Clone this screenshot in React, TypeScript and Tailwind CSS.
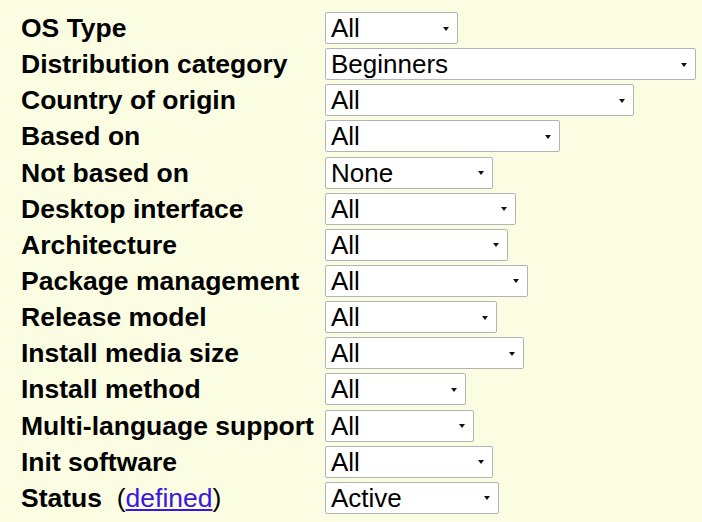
import React from "react";

const rows: { label: string; value: string; w: number }[] = [
  { label: "OS Type", value: "All", w: 133 },
  { label: "Distribution category", value: "Beginners", w: 371 },
  { label: "Country of origin", value: "All", w: 309 },
  { label: "Based on", value: "All", w: 235 },
  { label: "Not based on", value: "None", w: 168 },
  { label: "Desktop interface", value: "All", w: 191 },
  { label: "Architecture", value: "All", w: 183 },
  { label: "Package management", value: "All", w: 203 },
  { label: "Release model", value: "All", w: 172 },
  { label: "Install media size", value: "All", w: 199 },
  { label: "Install method", value: "All", w: 141 },
  { label: "Multi-language support", value: "All", w: 149 },
  { label: "Init software", value: "All", w: 168 },
  { label: "Status", value: "Active", w: 174 },
];

function Select({ value, w }: { value: string; w: number }) {
  return (
    <div
      className="flex h-[32px] items-center justify-between rounded-[2px] border border-[#b4b4b4] bg-white pl-[5px] pr-[8px] text-[26px] leading-[30px] text-black"
      style={{ width: w }}
    >
      <span>{value}</span>
      <svg width="6" height="4" viewBox="0 0 6 4" className="mt-[1px]">
        <path d="M0 0 H6 L3 4 Z" fill="#111" />
      </svg>
    </div>
  );
}

export default function App() {
  return (
    <div className="min-h-[522px] w-full bg-[#fbfde3] pl-[21px] pt-[12px] font-['Liberation_Sans',Arial,sans-serif]">
      <div className="grid grid-cols-[304px_auto] gap-y-[4.15px]">
        {rows.map((r) => (
          <React.Fragment key={r.label}>
            <div className="flex h-[32px] items-center whitespace-nowrap text-[26.5px] font-bold leading-[30px] text-black">
              {r.label === "Status" ? (
                <>
                  <span>Status</span>
                  <span className="font-normal">
                    &nbsp;&nbsp;(
                    <a href="#" className="text-[#3a16e6] underline">
                      defined
                    </a>
                    )
                  </span>
                </>
              ) : (
                r.label
              )}
            </div>
            <div className="flex items-center">
              <Select value={r.value} w={r.w} />
            </div>
          </React.Fragment>
        ))}
      </div>
    </div>
  );
}
